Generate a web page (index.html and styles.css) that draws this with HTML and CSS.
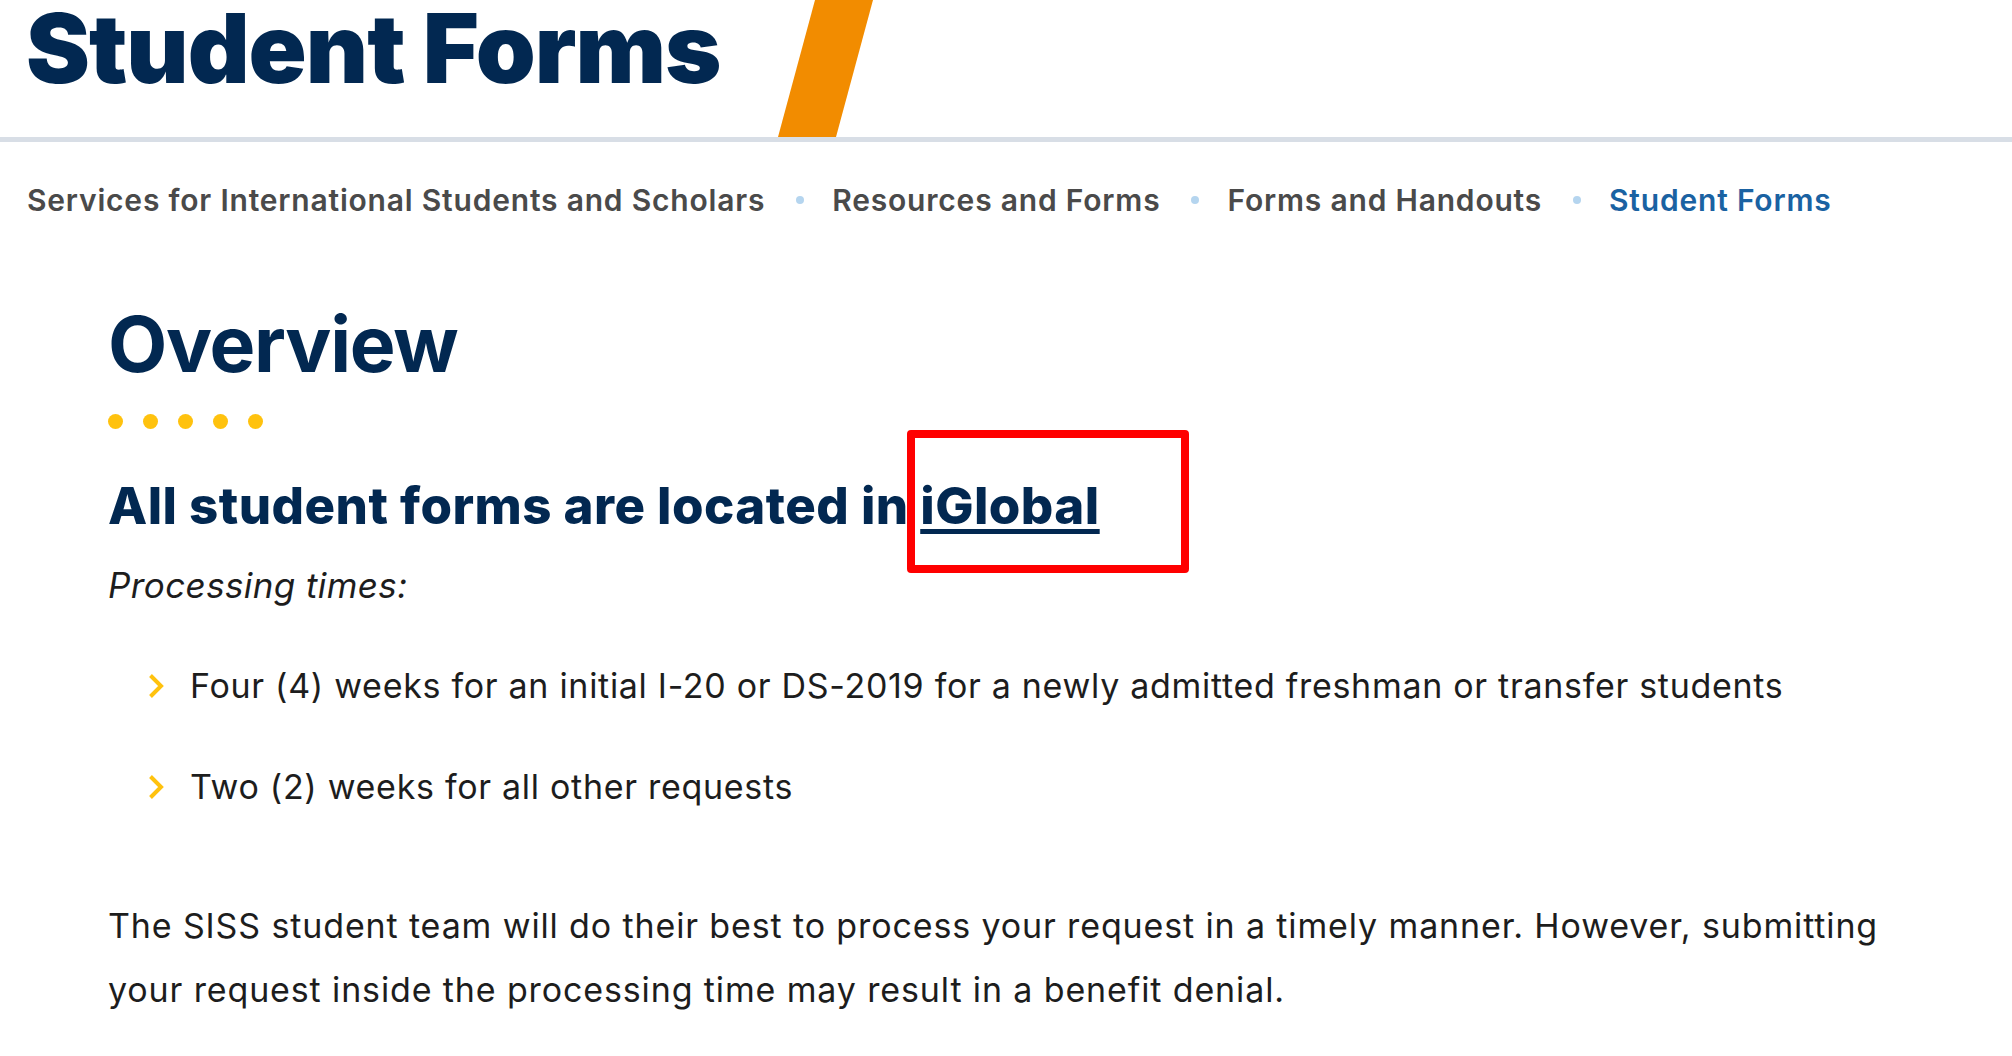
FILE: index.html
```html
<!DOCTYPE html>
<html lang="en">
<head>
    <meta charset="UTF-8">
    <meta name="viewport" content="width=device-width, initial-scale=1.0">
    <title>Student Forms</title>
    <link rel="stylesheet" href="styles.css">
</head>
<body>
    <header class="page-header">
        <h1 class="page-title">Student Forms</h1>
        <div class="slash"></div>
    </header>

    <nav class="breadcrumb">
        <a href="#" class="crumb">Services for International Students and Scholars</a>
        <span class="crumb-dot"></span>
        <a href="#" class="crumb">Resources and Forms</a>
        <span class="crumb-dot"></span>
        <a href="#" class="crumb">Forms and Handouts</a>
        <span class="crumb-dot"></span>
        <span class="crumb current">Student Forms</span>
    </nav>

    <main class="content">
        <h2 class="section-title">Overview</h2>
        <div class="dots">
            <span></span><span></span><span></span><span></span><span></span>
        </div>

        <h3 class="lead">All student forms are located in <a href="#" class="iglobal">iGlobal</a></h3>
        <p class="note">Processing times:</p>

        <ul class="times">
            <li>
                <svg class="chevron" width="16" height="26" viewBox="0 0 16 26"><path d="M2.5 2.5 L13 13 L2.5 23.5" fill="none" stroke="#ffc20e" stroke-width="4" stroke-linejoin="miter"/></svg>
                Four (4) weeks for an initial I-20 or DS-2019 for a newly admitted freshman or transfer students
            </li>
            <li>
                <svg class="chevron" width="16" height="26" viewBox="0 0 16 26"><path d="M2.5 2.5 L13 13 L2.5 23.5" fill="none" stroke="#ffc20e" stroke-width="4" stroke-linejoin="miter"/></svg>
                Two (2) weeks for all other requests
            </li>
        </ul>

        <p class="body-text">The SISS student team will do their best to process your request in a timely manner. However, submitting your request inside the processing time may result in a benefit denial.</p>
    </main>
</body>
</html>
```

FILE: styles.css
```css
body {
    margin: 0;
    background: #ffffff;
    font-family: 'Inter', 'Lato', sans-serif;
    color: #1d1d1d;
}

.page-header {
    display: grid;
    grid-template-columns: 752px 95px;
    height: 137px;
    padding-left: 26px;
    border-bottom: 5px solid #d8dee6;
}

.page-title {
    margin: 0;
    padding-top: 4px;
    font-size: 96px;
    line-height: 88px;
    font-weight: 900;
    letter-spacing: -1px;
    color: #022851;
    white-space: nowrap;
}

.slash {
    background: #f28c00;
    clip-path: polygon(37px 0, 95px 0, 58px 100%, 0 100%);
}

.breadcrumb {
    display: flex;
    align-items: center;
    margin-top: 38px;
    padding-left: 27px;
    font-size: 30px;
    line-height: 40px;
    font-weight: 600;
    letter-spacing: 0.8px;
}

.crumb {
    color: #4a4a4a;
    text-decoration: none;
}

.crumb.current {
    color: #1a62a2;
}

.crumb-dot {
    width: 8px;
    height: 8px;
    margin: 0 28px 0 31px;
    border-radius: 50%;
    background: #b5d5ef;
}

.content {
    padding-left: 108px;
}

.section-title {
    margin: 85px 0 0;
    font-size: 77px;
    line-height: 78px;
    font-weight: 700;
    letter-spacing: -1.3px;
    color: #022851;
}

.dots {
    display: flex;
    gap: 20px;
    margin-top: 31px;
}

.dots span {
    width: 15px;
    height: 15px;
    border-radius: 50%;
    background: #ffc20e;
}

.lead {
    margin: 47px 0 0;
    font-size: 51px;
    line-height: 60px;
    font-weight: 800;
    letter-spacing: 0.45px;
    color: #022851;
}

.iglobal {
    position: relative;
    color: #022851;
    text-decoration: underline;
    text-decoration-thickness: 5px;
    text-underline-offset: 5px;
}

.iglobal::after {
    content: "";
    position: absolute;
    left: -13px;
    top: -45px;
    width: 282px;
    height: 143px;
    box-sizing: border-box;
    border: 8px solid #ff0000;
    border-radius: 4px;
}

.note {
    margin: 27px 0 0;
    font-size: 35px;
    line-height: 44px;
    font-style: italic;
    font-weight: 400;
    letter-spacing: 0.4px;
}

.times {
    list-style: none;
    margin: 57px 0 0;
    padding: 0;
}

.times li {
    display: flex;
    align-items: center;
    gap: 26px;
    padding-left: 40px;
    font-size: 34px;
    line-height: 44px;
    letter-spacing: 0.7px;
}

.times li + li {
    margin-top: 57px;
}

.chevron {
    flex-shrink: 0;
}

.body-text {
    margin: 85px 0 0;
    max-width: 1790px;
    font-size: 34px;
    line-height: 64px;
    letter-spacing: 0.87px;
}
```
